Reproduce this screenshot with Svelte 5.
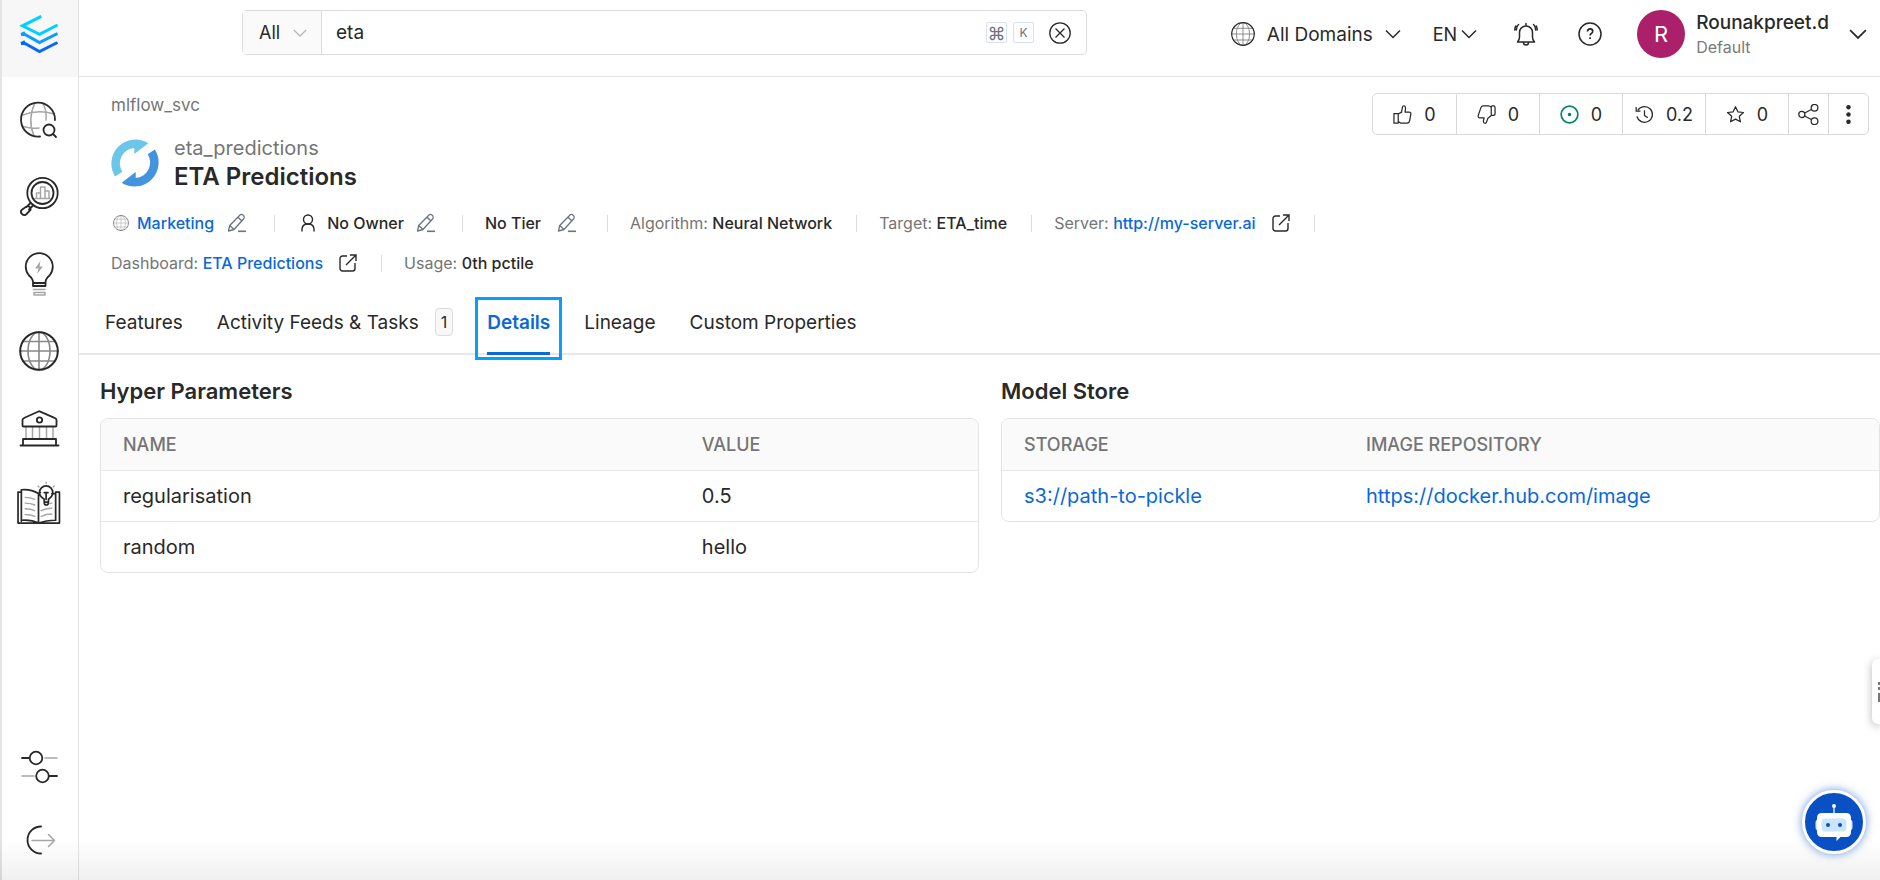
<script lang="ts">
  let query = $state('eta');
  let activeTab = $state('Details');

  const tabs = [
    { label: 'Features' },
    { label: 'Activity Feeds & Tasks', count: 1 },
    { label: 'Details' },
    { label: 'Lineage' },
    { label: 'Custom Properties' }
  ];

  const hyperParameters = [
    { name: 'regularisation', value: '0.5' },
    { name: 'random', value: 'hello' }
  ];

  const stores = [{ storage: 's3://path-to-pickle', image: 'https://docker.hub.com/image' }];
</script>

{#snippet globe(size: number)}
  <svg class="globe" width={size} height={size} viewBox="0 0 40 40" fill="none" stroke="currentColor">
    <g stroke-width="1.6" opacity="0.55">
      <path d="M20 1v38M1 20h38M4 10.500h32M4 30h32" />
      <ellipse cx="20" cy="20" rx="11" ry="19" />
    </g>
    <circle cx="20" cy="20" r="18.800" stroke-width="2" />
  </svg>
{/snippet}

{#snippet chevron(size: number)}
  <svg class="chevron" width={size} height={size} viewBox="0 0 16 16" fill="none" stroke="currentColor" stroke-width="1.500">
    <path d="M1 4.500l7 7 7-7" />
  </svg>
{/snippet}

{#snippet pencil(label: string)}
  <button class="icon-button" type="button" aria-label={label}>
    <svg width="20" height="20" viewBox="0 0 20 20" fill="none" stroke="#6b7280" stroke-width="1.300" stroke-linejoin="round">
      <path d="M1.500 18l1.200-5.500L12.500 2.500a2.600 2.600 0 0 1 4 3.500L7 16.500zM11 4.300l4 3.600M2.700 12.500L7 16.500" />
      <path d="M11 18.300h8" stroke-width="1.600" />
    </svg>
  </button>
{/snippet}

{#snippet external()}
  <svg class="external" width="18" height="18" viewBox="0 0 18 18" fill="none" stroke="#292929" stroke-width="1.400">
    <path d="M8 2H3.500A2.500 2.500 0 0 0 1 4.500v10A2.500 2.500 0 0 0 3.500 17h10a2.500 2.500 0 0 0 2.500-2.500V9M7 11L16.500 1.500M11 1h6v6" />
  </svg>
{/snippet}

<div class="app">
  <aside class="sidebar">
    <a class="brand" href="#home" aria-label="Home">
      <svg width="40" height="40" viewBox="0 0 40 40" fill="none" stroke-width="3">
        <path d="M22.300 1.400L3.500 10.800 20.500 19.300 38.500 10" stroke="#00d0ff" />
        <path d="M2 19.500l4 0 14.500 8L38.500 18.500M2 19.500l4-1.800" stroke="#0a9cff" />
        <path d="M2 28.500l4 0 14.500 8L38.500 27.500M2 28.500l4-1.800" stroke="#0768ff" />
      </svg>
    </a>
    <nav class="side-nav" aria-label="Main">
      <a href="#explore" aria-label="Explore">
        <svg viewBox="0 0 40 40">
          <path class="soft" d="M4 15q15-6 31-1M4 26.500q8 2.200 16 1.500M16 3q-8 16-1 33M24 3q4 9 3 17" />
          <path d="M21 36.500A17 17 0 1 1 36 20" />
          <circle cx="30" cy="30" r="5.500" />
          <path d="M34 34l3 3" />
        </svg>
      </a>
      <a href="#observability" aria-label="Observability">
        <svg viewBox="0 0 40 40">
          <circle cx="23.500" cy="16" r="15.200" />
          <circle cx="23.500" cy="16" r="11" />
          <path class="soft" d="M16 21.500h15M17.500 21v-5h4v5M21.500 16v-6h4.500v11M26 14h4v7" />
          <path d="M11.500 26L7.500 30M14 28.500l-4 4M7.500 29.500q2-1 3.500 1t-.5 3.500l-3.500 3.500q-2 1.500-4-.5t-.5-4z" />
        </svg>
      </a>
      <a href="#insights" aria-label="Insights">
        <svg viewBox="0 0 40 40">
          <path d="M14 29v-1q0-3-4-6.500a13.500 13.500 0 1 1 20.500 0q-4 3.500-4 6.500v1M14 29h12.500v3H14z" />
          <path class="soft-fill" d="M21.500 7l-5.500 7.500h3.500L18 20l6-7.500h-3.500z" />
          <path class="soft" d="M14.500 35.500h11.500M15 38.500h11v2.500H15z" />
        </svg>
      </a>
      <a href="#domains" aria-label="Domains">{@render globe(40)}</a>
      <a href="#govern" aria-label="Govern">
        <svg viewBox="0 0 40 40">
          <path class="soft" d="M7 19v11M13.500 19v11M20.500 19v11M27.500 19v11M34 19v11" />
          <path d="M3.500 17.500V12q0-1.500 2-2.200L20 3.200l15.500 6.600q2 .7 2 2.200v5.500q0 1-1 1h-32q-1 0-1-1zM4 37v-6h33v6M1.500 37.500h38" />
          <circle cx="20.500" cy="12" r="2.700" />
        </svg>
      </a>
      <a href="#glossary" aria-label="Glossary">
        <svg class="wide" viewBox="0 0 46 42">
          <path d="M5 7.500H1.500V40H45V7.500h-4M5 38V5q10-1 18 4 1-1 2-1.200M37 9h4v28q-10 0-18 3-8-4-18-3M23 9v31M29 18v-3q-5-3-5-7a7 7 0 0 1 14 0q0 4-4.500 7v3zM29 18q0 3 2.200 3t2.200-3M31 9v6M29 8h4" />
          <path class="soft" d="M9 13q6 0 10 2M9 19q6 0 10 2M9 25q6 0 10 2M9 31q6 0 10 2M26 27q5-2.500 11-2.500M26 33q5-2.500 11-2.500M37 19l-2 .5M31-3v1.500M22.500 1l1 1M39.500 1l-1 1" />
        </svg>
      </a>
    </nav>
    <nav class="side-nav bottom" aria-label="Account">
      <a href="#settings" aria-label="Settings">
        <svg viewBox="0 0 40 40">
          <path d="M3 11h7M30 29h8" />
          <circle cx="17" cy="11" r="6.300" />
          <circle cx="23.500" cy="29" r="6.300" />
          <path class="soft" d="M26 11h12M3 29h12" />
        </svg>
      </a>
      <a href="#logout" aria-label="Logout">
        <svg viewBox="0 0 40 40">
          <path d="M22 6.500a13.500 13.500 0 0 0 0 27" />
          <path class="soft" d="M13 20.500h22M29.500 14.500l6 6-6 6" />
        </svg>
      </a>
    </nav>
  </aside>

  <div class="content">
    <header class="topbar">
      <form class="search" role="search">
        <div class="scope">
          <select aria-label="Search scope"><option>All</option></select>
          {@render chevron(14)}
        </div>
        <input aria-label="Search" bind:value={query} />
        <kbd>⌘</kbd>
        <kbd>K</kbd>
        <button class="icon-button clear" type="button" aria-label="Clear search" onclick={() => (query = '')}>
          <svg width="22" height="22" viewBox="0 0 22 22" fill="none" stroke="#292929" stroke-width="1.300">
            <circle cx="11" cy="11" r="10.200" />
            <path d="M6.500 6.500l9 9M15.500 6.500l-9 9" />
          </svg>
        </button>
      </form>

      <div class="tools">
        <button class="menu domains" type="button">
          {@render globe(24)}
          <span>All Domains</span>
          {@render chevron(16)}
        </button>
        <button class="menu language" type="button">EN {@render chevron(16)}</button>
        <button class="icon-button" type="button" aria-label="Notifications">
          <svg width="24" height="24" viewBox="0 0 24 24" fill="none" stroke="#292929" stroke-width="1.500" stroke-linecap="round" stroke-linejoin="round">
            <path d="M3.500 20q2-2 2-5v-4.500a6.500 6.500 0 0 1 13 0V15q0 3 2 5zM12 4V1.500M9.500 20.500q0 2.500 2.500 2.500t2.500-2.500M4.500 2.500Q2.500 4 2.300 8M1.800 4Q.8 5.500.8 8M19.500 2.500q2 1.500 2.200 5.500M22.200 4q1 1.500 1 4" />
          </svg>
        </button>
        <button class="icon-button help" type="button" aria-label="Help">
          <svg width="24" height="24" viewBox="0 0 24 24" fill="none" stroke="#292929" stroke-width="1.500">
            <circle cx="12" cy="12" r="11" />
            <path d="M9.500 9.500q0-2.700 2.600-2.700t2.600 2.400q0 1.500-1.400 2.300-1.200.8-1.200 2M12.100 15.300v1.800" stroke-width="1.700" />
          </svg>
        </button>
        <button class="profile" type="button">
          <span class="avatar">R</span>
          <span class="who">
            <span class="name">Rounakpreet.d</span>
            <span class="team">Default</span>
          </span>
          {@render chevron(18)}
        </button>
      </div>
    </header>

    <main>
      <section class="entity">
        <div class="summary">
          <a class="crumb" href="#service">mlflow_svc</a>
          <div class="title">
            <svg width="48" height="48" viewBox="0 0 48 48">
              <path fill="#6cc6ea" d="M4.200 37.500A24 24 0 0 1 37.300 4.300L23.300 15V9A15.500 15.500 0 0 0 11.300 32.800z" />
              <path fill="#4393de" d="M43.800 10.500A24 24 0 0 1 10.700 43.700L24.700 33v6A15.500 15.500 0 0 0 36.700 15.200z" />
            </svg>
            <div>
              <p>eta_predictions</p>
              <h1>ETA Predictions</h1>
            </div>
          </div>
        </div>
        <div class="actions">
          <button type="button" aria-label="Up votes">
            <svg viewBox="0 0 20 20">
              <path d="M1 9h4.500v10H1zM5.500 9.500L9 7.500 10 2q.3-1.300 1.500-1.200 1.700.2 1.700 2.700L12.700 7.500H17q2 0 1.800 2l-1.300 7q-.5 2.500-2.500 2.500H8l-2.500-1.500" />
            </svg>
            0
          </button>
          <button type="button" aria-label="Down votes">
            <svg viewBox="0 0 20 20">
              <path d="M16 1h1.500q1.500 0 1.500 1.500v7q0 1.500-1.500 1.500H16q-1 0-1-1V2q0-1 1-1zM15 11l-3.500 3-1.500 4q-.5 1.500-1.800 1.200-1.700-.5-1.400-2.700l.7-3H3q-2 0-1.800-2L4 3Q4.700 1 6.500 1H12q1.500 0 3 1.500" />
            </svg>
            0
          </button>
          <button class="open-tasks" type="button" aria-label="Open tasks">
            <svg viewBox="0 0 20 20">
              <circle cx="10" cy="10" r="8.800" />
              <circle class="dot" cx="10" cy="10" r="1" />
            </svg>
            0
          </button>
          <button type="button" aria-label="Version">
            <svg viewBox="0 0 20 20">
              <path d="M3 5.500A8.300 8.300 0 1 1 2 12M1.200 2v4.500h4.500M10 5.500V11l3.500 2.500" />
            </svg>
            0.2
          </button>
          <button type="button" aria-label="Follow">
            <svg viewBox="0 0 20 20">
              <path d="M10 1.800l2.500 5.400 5.900.7-4.400 4 1.200 5.800L10 14.900l-5.200 2.800L6 11.900l-4.400-4 5.900-.7z" />
            </svg>
            0
          </button>
          <button class="narrow" type="button" aria-label="Share">
            <svg viewBox="0 0 22 22">
              <circle cx="4" cy="11" r="3.200" />
              <circle cx="17.300" cy="4" r="3.500" />
              <circle cx="17.300" cy="18" r="3.500" />
              <path d="M7 9.500l7-3.700M7 12.500l7 3.700" />
            </svg>
          </button>
          <button class="narrow" type="button" aria-label="More">
            <svg viewBox="0 0 20 20">
              <circle class="dot" cx="10" cy="3" r="1.500" />
              <circle class="dot" cx="10" cy="10" r="1.500" />
              <circle class="dot" cx="10" cy="17" r="1.500" />
            </svg>
          </button>
        </div>
      </section>

      <div class="facts">
        <div class="fact editable domain">
          {@render globe(16)}
          <a href="#marketing">Marketing</a>
          {@render pencil('Edit domain')}
        </div>
        <div class="fact editable owner">
          <svg width="14" height="18" viewBox="0 0 14 18" fill="none" stroke="#292929" stroke-width="1.400">
            <circle cx="7" cy="5.500" r="4.500" />
            <path d="M1 17.500v-2Q1 10 7 10t6 5.500v2" />
          </svg>
          <strong>No Owner</strong>
          {@render pencil('Edit owner')}
        </div>
        <div class="fact editable">
          <strong>No Tier</strong>
          {@render pencil('Edit tier')}
        </div>
        <div class="fact">
          <span>Algorithm: <strong>Neural Network</strong></span>
        </div>
        <div class="fact">
          <span>Target: <strong>ETA_time</strong></span>
        </div>
        <div class="fact">
          <span>Server: <a href="#server">http://my-server.ai</a></span>
          {@render external()}
        </div>
        <div class="fact">
          <span>Dashboard: <a href="#dashboard">ETA Predictions</a></span>
          {@render external()}
        </div>
        <div class="fact">
          <span>Usage: <strong>0th pctile</strong></span>
        </div>
      </div>

      <div class="tabs" role="tablist">
        {#each tabs as tab (tab.label)}
          <button
            role="tab"
            type="button"
            class:active={tab.label === activeTab}
            aria-selected={tab.label === activeTab}
            onclick={() => (activeTab = tab.label)}
          >
            {tab.label}
            {#if tab.count}
              <span class="count">{tab.count}</span>
            {/if}
          </button>
        {/each}
      </div>

      <div class="panels">
        <section>
          <h2>Hyper Parameters</h2>
          <div class="table-card">
            <table class="params">
              <thead>
                <tr><th>NAME</th><th>VALUE</th></tr>
              </thead>
              <tbody>
                {#each hyperParameters as row (row.name)}
                  <tr><td>{row.name}</td><td>{row.value}</td></tr>
                {/each}
              </tbody>
            </table>
          </div>
        </section>
        <section>
          <h2>Model Store</h2>
          <div class="table-card">
            <table class="stores">
              <thead>
                <tr><th>STORAGE</th><th>IMAGE REPOSITORY</th></tr>
              </thead>
              <tbody>
                {#each stores as store (store.storage)}
                  <tr>
                    <td><a href={store.storage}>{store.storage}</a></td>
                    <td><a href={store.image}>{store.image}</a></td>
                  </tr>
                {/each}
              </tbody>
            </table>
          </div>
        </section>
      </div>
    </main>
  </div>

  <div class="fade"></div>

  <button class="drawer" type="button" aria-label="Open resources">
    <svg width="16" height="20" viewBox="0 0 16 20" fill="#777">
      <path d="M0 0h3v3H0zM0 5h3v3H0zM0 11h3v9H0z" />
    </svg>
  </button>

  <button class="bot" type="button" aria-label="Open chat">
    <svg width="40" height="40" viewBox="0 0 40 40">
      <path d="M20 4v8" stroke="#fff" stroke-width="1.200" />
      <circle cx="20" cy="4" r="2" fill="#fff" />
      <rect x="1.500" y="17" width="37" height="12" rx="4" fill="#d9ecfd" />
      <path fill="#fff" d="M8 11h24q5 0 5 5v14q0 5-5 5h-5.500L22.500 39v-4H8q-5 0-5-5V16q0-5 5-5z" />
      <rect x="7.500" y="16.500" width="25" height="13" rx="4" fill="#c9e5ff" />
      <circle cx="14" cy="23" r="2" fill="#0950c5" />
      <circle cx="26" cy="23" r="2" fill="#0950c5" />
    </svg>
  </button>
</div>

<style>
  :global(body) {
    margin: 0;
    background: #fff;
  }

  .app {
    display: grid;
    grid-template-columns: 79px minmax(0, 1fr);
    min-height: 100vh;
    font-family: Inter, 'Liberation Sans', sans-serif;
    font-size: 18px;
    color: #292929;
  }

  .app :global(*) {
    box-sizing: border-box;
  }

  svg {
    display: block;
    flex: none;
  }

  button,
  input,
  select {
    font: inherit;
    color: inherit;
    border: none;
    background: none;
    padding: 0;
    margin: 0;
    outline: none;
  }

  button {
    cursor: pointer;
  }

  a {
    color: #0968da;
    text-decoration: none;
  }

  .icon-button {
    display: block;
  }

  .sidebar {
    display: flex;
    flex-direction: column;
    border-left: 2px solid #e4e4e4;
    border-right: 1px solid #e4e4e4;
  }

  .brand {
    height: 77px;
    padding: 15px 0 0 17px;
    background: #f7f7f7;
  }

  .side-nav {
    display: grid;
    grid-auto-rows: 77px;
    padding: 4px 3px 0 0;
  }

  .side-nav.bottom {
    grid-auto-rows: 73px;
    margin-top: auto;
    padding: 0 3px 4px 0;
  }

  .side-nav a {
    display: grid;
    place-items: center;
    color: #292929;
  }

  .side-nav svg {
    width: 40px;
    height: 40px;
    fill: none;
    stroke: #292929;
    stroke-width: 1.800;
    stroke-linecap: round;
    stroke-linejoin: round;
    overflow: visible;
  }

  .side-nav svg.wide {
    width: 45px;
  }

  .side-nav .soft {
    stroke: #a6a6a6;
    stroke-width: 1.500;
  }

  .side-nav .soft-fill {
    fill: #a6a6a6;
    stroke: none;
  }

  .topbar {
    display: flex;
    align-items: flex-start;
    justify-content: space-between;
    height: 77px;
    padding: 10px 13px 0 163px;
    border-bottom: 1px solid #e4e4e4;
  }

  .search {
    display: flex;
    align-items: center;
    width: 52%;
    height: 45px;
    border: 1px solid #dcdcdc;
    border-radius: 5px;
  }

  .scope {
    display: flex;
    align-items: center;
    gap: 12px;
    width: 79px;
    height: 100%;
    padding-left: 16px;
    border-right: 1px solid #dcdcdc;
    background: #fafafa;
  }

  .scope select {
    appearance: none;
  }

  .scope .chevron {
    color: #b8b8b8;
  }

  .search input {
    flex: 1;
    min-width: 0;
    padding-left: 14px;
    font-size: 19px;
  }

  kbd {
    display: grid;
    place-items: center;
    width: 21px;
    height: 21px;
    margin-right: 6px;
    border: 1px solid #d9e1ec;
    border-radius: 2px;
    font-family: Inter, 'DejaVu Sans', sans-serif;
    font-size: 12px;
    color: #6b7280;
  }

  kbd:first-of-type {
    font-size: 18px;
  }

  .clear {
    margin: 0 15px 0 9px;
  }

  .tools {
    display: flex;
    align-items: center;
    height: 48px;
  }

  .tools > .icon-button {
    margin-right: 40px;
  }

  .menu {
    display: flex;
    align-items: center;
  }

  .domains {
    gap: 12px;
    margin-right: 32px;
    font-size: 19px;
  }

  .language {
    gap: 4px;
    margin-right: 37px;
  }

  .tools > .help {
    margin-right: 35px;
  }

  .profile {
    display: flex;
    align-items: center;
    text-align: left;
  }

  .avatar {
    display: grid;
    place-items: center;
    width: 48px;
    height: 48px;
    margin-right: 11px;
    border-radius: 50%;
    background: #ab1f6b;
    color: #fff;
    font-size: 22px;
  }

  .who {
    display: grid;
    margin-right: 20px;
  }

  .name {
    font-size: 19px;
    font-weight: 500;
    line-height: 26px;
  }

  .team {
    font-size: 16px;
    line-height: 22px;
    color: #7a7a7a;
  }

  .entity {
    display: flex;
    justify-content: space-between;
    align-items: flex-start;
    padding: 16px 11px 0 32px;
  }

  .crumb {
    display: block;
    font-size: 17px;
    line-height: 24px;
    color: #757575;
  }

  .title {
    display: flex;
    align-items: center;
    gap: 15px;
    margin-top: 17px;
  }

  .title p {
    margin: 0;
    font-size: 20px;
    line-height: 28px;
    color: #757575;
  }

  h1 {
    margin: 0;
    font-size: 24px;
    line-height: 30px;
    font-weight: 600;
  }

  .actions {
    display: flex;
    height: 42px;
    border: 1px solid #d9d9d9;
    border-radius: 5px;
  }

  .actions button {
    display: flex;
    align-items: center;
    justify-content: center;
    gap: 12px;
    width: 83px;
  }

  .actions button + button {
    border-left: 1px solid #d9d9d9;
  }

  .actions .narrow {
    width: 40px;
  }

  .actions svg {
    width: 19px;
    height: 19px;
    fill: none;
    stroke: #292929;
    stroke-width: 1.300;
    stroke-linejoin: round;
  }

  .actions .narrow svg {
    width: 21px;
    height: 21px;
  }

  .actions .open-tasks svg {
    stroke: #07826e;
    stroke-width: 1.800;
  }

  .actions svg .dot {
    fill: currentColor;
  }

  .facts {
    display: flex;
    flex-wrap: wrap;
    width: 75%;
    padding: 11px 0 0 32px;
    font-size: 16px;
    line-height: 40px;
    color: #757575;
  }

  .fact {
    display: flex;
    align-items: center;
    gap: 16px;
    white-space: nowrap;
  }

  .fact:not(:last-child)::after {
    content: '';
    width: 1px;
    height: 17px;
    margin: 0 22px 0 8px;
    background: #dcdcdc;
  }

  .editable:not(:last-child)::after {
    margin-left: 14px;
  }

  .domain {
    gap: 13px;
    padding-left: 2px;
  }

  .domain a {
    margin-left: -5px;
  }

  .owner {
    gap: 12px;
    padding-left: 4px;
  }

  .fact strong {
    font-weight: 500;
    color: #292929;
  }

  .fact a {
    font-weight: 500;
  }

  .tabs {
    display: flex;
    gap: 34px;
    padding: 8px 0 0 26px;
    border-bottom: 2px solid #e8e8e8;
    font-size: 19px;
  }

  .tabs button {
    position: relative;
    display: flex;
    align-items: center;
    gap: 16px;
    height: 62px;
  }

  .count {
    padding: 0 5px;
    border: 1px solid #dcdcdc;
    border-radius: 4px;
    background: #f8f8f8;
    font-size: 16px;
    line-height: 26px;
  }

  .tabs .active {
    color: #0968da;
    font-weight: 600;
  }

  .tabs .active::before {
    content: '';
    position: absolute;
    inset: 6px -12px -7px;
    border: 3px solid #079fff;
  }

  .tabs .active::after {
    content: '';
    position: absolute;
    inset: auto 0 -2px;
    height: 3px;
    background: #0968da;
  }

  .panels {
    display: grid;
    grid-template-columns: repeat(2, minmax(0, 1fr));
    gap: 22px;
    padding: 21px 0 0 21px;
  }

  h2 {
    margin: 0 0 12px;
    font-size: 22px;
    line-height: 30px;
    font-weight: 600;
  }

  .table-card {
    border: 1px solid #e4e4e4;
    border-radius: 8px;
    overflow: hidden;
  }

  table {
    width: 100%;
    table-layout: fixed;
    border-collapse: collapse;
  }

  th,
  td {
    height: 51px;
    padding: 0 22px;
    text-align: left;
  }

  th {
    background: #fafafa;
    color: #757575;
    font-weight: 500;
  }

  td {
    font-size: 20px;
  }

  tbody tr {
    border-top: 1px solid #e8e8e8;
  }

  .params th:first-child {
    width: 66%;
  }

  .stores th:first-child {
    width: 39%;
  }

  .fade {
    position: fixed;
    inset: auto 0 0;
    height: 40px;
    background: linear-gradient(transparent, rgba(0, 0, 0, 0.06));
    pointer-events: none;
  }

  .drawer {
    position: fixed;
    right: 0;
    bottom: 156px;
    width: 8px;
    height: 65px;
    padding-left: 6px;
    border-radius: 6px 0 0 6px;
    background: #fff;
    box-shadow: 0 2px 8px rgba(0, 0, 0, 0.3);
    overflow: hidden;
  }

  .bot {
    position: fixed;
    right: 14px;
    bottom: 26px;
    display: grid;
    place-items: center;
    width: 64px;
    height: 64px;
    border: 3px solid #fff;
    border-radius: 50%;
    background: #0950c5;
    box-shadow: 0 0 10px rgba(9, 80, 197, 0.6);
  }
</style>
